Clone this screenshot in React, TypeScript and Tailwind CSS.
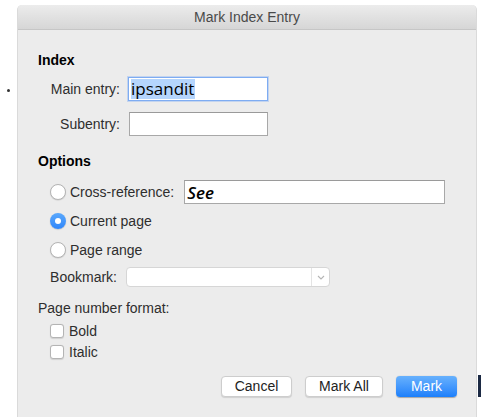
function Radio({ checked = false }: { checked?: boolean }) {
  if (checked) {
    return (
      <span className="flex h-[16px] w-[16px] shrink-0 items-center justify-center rounded-full bg-gradient-to-b from-[#5aa8fc] to-[#2f86fa] shadow-[0_0.5px_1px_rgba(0,0,0,0.25)]">
        <span className="h-[6px] w-[6px] rounded-full bg-white" />
      </span>
    );
  }
  return (
    <span className="h-[16px] w-[16px] shrink-0 rounded-full border border-[#b4b4b4] bg-white shadow-[0_0.5px_1px_rgba(0,0,0,0.15)]" />
  );
}

function Checkbox({ label }: { label: string }) {
  return (
    <div className="flex h-[18px] items-center gap-[5px] pl-[12px]">
      <span className="h-[14px] w-[14px] shrink-0 rounded-[3px] border border-[#b4b4b4] bg-white shadow-[0_0.5px_1px_rgba(0,0,0,0.12)]" />
      <span>{label}</span>
    </div>
  );
}

function Button({
  children,
  width,
  primary = false,
}: {
  children: string;
  width: string;
  primary?: boolean;
}) {
  return (
    <button
      className={
        primary
          ? `${width} h-[21px] rounded-[4px] bg-gradient-to-b from-[#67b1fd] to-[#1b7ffb] text-white shadow-[0_0.5px_1px_rgba(0,0,0,0.3)]`
          : `${width} h-[21px] rounded-[4px] border border-[#cdcdcd] bg-white text-[#222] shadow-[0_1px_1px_rgba(0,0,0,0.12)]`
      }
    >
      {children}
    </button>
  );
}

export default function App() {
  return (
    <div
      className="flex h-[417px] w-[484px] overflow-hidden bg-white text-[14px] leading-[17px] text-[#2e2e2e]"
      style={{ fontFamily: '"Liberation Sans", Arial, sans-serif' }}
    >
      {/* stray mark left of the sheet */}
      <div className="w-[17px] shrink-0">
        <div className="ml-[7px] mt-[89px] h-[3px] w-[3px] rounded-full bg-[#333]" />
      </div>

      <div className="mt-[5px] flex h-[412px] w-[460px] shrink-0 flex-col overflow-hidden rounded-t-[5px] border-x border-[#dadada] bg-[#ececec]">
        <div className="flex h-[25px] shrink-0 items-center justify-center border-b border-[#c6c6c6] bg-gradient-to-b from-[#ececec] to-[#d6d6d6] text-[#4a4a4a]">
          Mark Index Entry
        </div>

        <div className="flex flex-1 flex-col pl-[20px] pr-[19px]">
          <div className="mt-[22px] font-bold text-black">Index</div>

          <div className="mt-[8px] flex h-[24px] items-center">
            <span className="w-[82px] text-right">Main entry:</span>
            <div className="ml-[8px] flex h-[24px] w-[140px] items-center border border-[#7eacf2] bg-white pl-[2px] shadow-[0_0_0_1px_rgba(120,170,245,0.35)]">
              <span
                className="bg-[#b5d5fd] pr-[1px] text-[17px] leading-[20px] text-black"
                style={{ fontFamily: '"Open Sans", sans-serif' }}
              >
                ipsandit
              </span>
            </div>
          </div>

          <div className="mt-[11px] flex h-[24px] items-center">
            <span className="w-[82px] text-right">Subentry:</span>
            <div className="ml-[9px] h-[24px] w-[139px] border border-[#a8a8a8] border-t-[#9a9a9a] bg-white" />
          </div>

          <div className="mt-[17px] font-bold text-black">Options</div>

          <div className="mt-[10px] flex flex-col gap-[5px] pl-[12px]">
            <div className="flex h-[24px] items-center">
              <Radio />
              <span className="ml-[4px]">Cross-reference:</span>
              <div className="ml-[10px] flex h-[24px] w-[261px] items-center border border-[#a8a8a8] border-t-[#9a9a9a] bg-white pl-[2px]">
                <span
                  className="text-[17px] font-semibold italic text-black"
                  style={{ fontFamily: '"Open Sans", sans-serif' }}
                >
                  See
                </span>
              </div>
            </div>
            <div className="flex h-[24px] items-center">
              <Radio checked />
              <span className="ml-[4px]">Current page</span>
            </div>
            <div className="flex h-[24px] items-center">
              <Radio />
              <span className="ml-[4px]">Page range</span>
            </div>
            <div className="flex h-[20px] items-center">
              <span className="w-[67px] text-right">Bookmark:</span>
              <div className="ml-[9px] flex h-[20px] w-[204px] overflow-hidden rounded-[4px] border border-[#d6d6d6] bg-white">
                <div className="flex-1" />
                <div className="flex w-[18px] items-center justify-center border-l border-[#e4e4e4]">
                  <svg width="8" height="5" viewBox="0 0 8 5" fill="none">
                    <path d="M1 1l3 3 3-3" stroke="#b5b5b5" strokeWidth="1.1" />
                  </svg>
                </div>
              </div>
            </div>
          </div>

          <div className="mt-[13px]">Page number format:</div>

          <div className="mt-[5px] flex flex-col gap-[3px]">
            <Checkbox label="Bold" />
            <Checkbox label="Italic" />
          </div>

          <div className="mt-[15px] flex justify-end gap-[13px]">
            <Button width="w-[71px]">Cancel</Button>
            <Button width="w-[78px]">Mark All</Button>
            <Button width="w-[61px]" primary>
              Mark
            </Button>
          </div>
        </div>
      </div>

      {/* edge of the window behind */}
      <div className="flex-1 pt-[375px]">
        <div className="ml-[1px] h-[22px] w-[3px] bg-[#1c2a44]" />
      </div>
    </div>
  );
}
